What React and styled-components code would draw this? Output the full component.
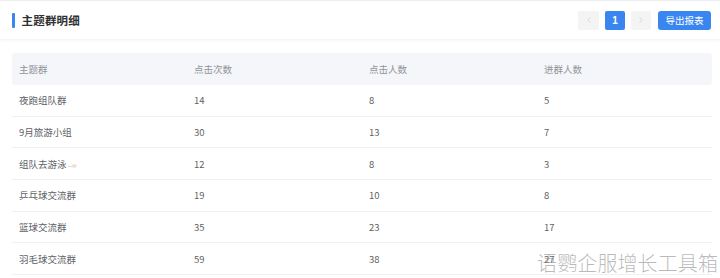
import React from 'react';
import styled, { createGlobalStyle } from 'styled-components';
import { ChevronLeft, ChevronRight } from 'lucide-react';

const GlobalStyle = createGlobalStyle`
  html, body {
    margin: 0;
    padding: 0;
    background: #fff;
  }
  body {
    font-family: "Noto Sans CJK SC", "Noto Sans", "Liberation Sans", sans-serif;
    -webkit-font-smoothing: antialiased;
  }
`;

const Page = styled.div`
  position: relative;
  width: 720px;
  height: 278px;
  overflow: hidden;
  border-top: 1px solid #eceef2;
  box-sizing: border-box;
`;

const Header = styled.header`
  display: flex;
  align-items: center;
  justify-content: space-between;
  height: 38px;
  padding: 0 9px 0 12px;
  box-shadow: 0 1px 3px rgba(0, 0, 0, 0.04);
  border-bottom: 1px solid #f3f4f6;
`;

const Title = styled.h1`
  display: flex;
  align-items: center;
  gap: 7px;
  margin: 0;
  font-size: 11.5px;
  font-weight: 700;
  color: #303133;
  letter-spacing: 0.2px;

  &::before {
    content: '';
    width: 2.5px;
    height: 15px;
    border-radius: 1px;
    background: #3a86f0;
  }
`;

const Actions = styled.div`
  display: flex;
  align-items: center;
  gap: 6px;
`;

const PageButton = styled.button`
  display: flex;
  align-items: center;
  justify-content: center;
  width: ${p => (p.$wide ? '21px' : '20px')};
  height: 19px;
  padding: 0;
  border: none;
  border-radius: 2px;
  background: ${p => (p.$active ? '#3a86f0' : '#f4f4f5')};
  color: ${p => (p.$active ? '#fff' : '#c0c4cc')};
  font-family: "Liberation Sans", sans-serif;
  font-size: 10px;
  font-weight: 700;
`;

const ExportButton = styled.button`
  width: 53px;
  height: 19px;
  padding: 0;
  border: none;
  border-radius: 3px;
  background: #3a86f0;
  color: #fff;
  font-family: inherit;
  font-size: 9.5px;
  margin-left: 1px;
`;

const Body = styled.div`
  padding: 13px 8px 0 12px;
`;

const Table = styled.table`
  width: 700px;
  border-collapse: collapse;
  table-layout: fixed;
`;

const HeadCell = styled.th`
  height: 32px;
  padding: 0 7px;
  background: #f5f6f9;
  color: #909399;
  font-size: 9.5px;
  font-weight: 400;
  text-align: left;

  &:first-child {
    border-radius: 3px 0 0 3px;
  }
  &:last-child {
    border-radius: 0 3px 3px 0;
  }
`;

const Cell = styled.td`
  height: 30.7px;
  padding: 0 7px;
  border-bottom: 1px solid #eef0f4;
  color: #606266;
  font-size: 9.5px;
  white-space: nowrap;
`;

const Emoji = styled.svg`
  margin-left: 1px;
  vertical-align: -1px;
  opacity: 0.55;
`;

const Watermark = styled.div`
  position: absolute;
  right: 2px;
  bottom: 1px;
  color: rgba(140, 140, 140, 0.6);
  font-size: 20px;
  font-weight: 300;
  letter-spacing: 0.1px;
  pointer-events: none;
`;

const rows = [
  { name: '夜跑组队群', clicks: 14, users: 8, joined: 5 },
  { name: '9月旅游小组', clicks: 30, users: 13, joined: 7 },
  { name: '组队去游泳', clicks: 12, users: 8, joined: 3, emoji: true },
  { name: '乒乓球交流群', clicks: 19, users: 10, joined: 8 },
  { name: '篮球交流群', clicks: 35, users: 23, joined: 17 },
  { name: '羽毛球交流群', clicks: 59, users: 38, joined: 27 }
];

const columns = ['主题群', '点击次数', '点击人数', '进群人数'];

const App = () => (
  <Page>
    <GlobalStyle />
    <Header>
      <Title>主题群明细</Title>
      <Actions>
        <PageButton $wide>
          <ChevronLeft size={10} strokeWidth={1.5} />
        </PageButton>
        <PageButton $active>1</PageButton>
        <PageButton>
          <ChevronRight size={10} strokeWidth={1.5} />
        </PageButton>
        <ExportButton>导出报表</ExportButton>
      </Actions>
    </Header>
    <Body>
      <Table>
        <thead>
          <tr>
            {columns.map(c => (
              <HeadCell key={c}>{c}</HeadCell>
            ))}
          </tr>
        </thead>
        <tbody>
          {rows.map(r => (
            <tr key={r.name}>
              <Cell>
                {r.name}
                {r.emoji && (
                  <Emoji width="10" height="6" viewBox="0 0 10 6">
                    <path d="M0 3.5 H4" stroke="#b9c2cc" strokeWidth="1" />
                    <path d="M4 2 Q6 0.5 8.5 2 Q9.5 3.5 7.5 4.5 Q5.5 5 4 4 Z" fill="#f2c39a" />
                  </Emoji>
                )}
              </Cell>
              <Cell>{r.clicks}</Cell>
              <Cell>{r.users}</Cell>
              <Cell>{r.joined}</Cell>
            </tr>
          ))}
        </tbody>
      </Table>
    </Body>
    <Watermark>语鹦企服增长工具箱</Watermark>
  </Page>
);

export default App;
